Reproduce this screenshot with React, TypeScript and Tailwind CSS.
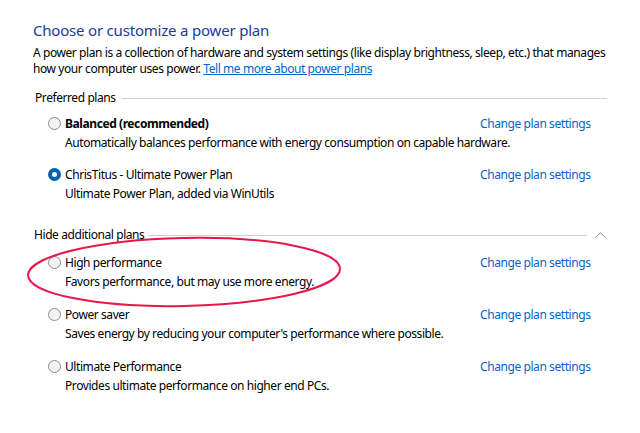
const font = { fontFamily: '"Segoe UI", "Noto Sans", Arial, sans-serif' };

function Radio({ checked }: { checked?: boolean }) {
  if (checked) {
    return (
      <span className="flex size-[13px] shrink-0 items-center justify-center rounded-full bg-[#0063b1]">
        <span className="size-[5px] rounded-full bg-white" />
      </span>
    );
  }
  return <span className="size-[13px] shrink-0 rounded-full border border-[#8c8c8c] bg-[#f3f3f3]" />;
}

type Plan = { name: string; desc: string; checked?: boolean; bold?: boolean };

function PlanRow({ plan }: { plan: Plan }) {
  return (
    <div className="pl-[15px]">
      <div className="flex h-[19px] items-center">
        <div className="flex w-[432px] items-center gap-[4px]">
          <Radio checked={plan.checked} />
          <span className={plan.bold ? "font-bold" : ""}>{plan.name}</span>
        </div>
        <span className="text-[#0066cc]">Change plan settings</span>
      </div>
      <div className="flex h-[19px] items-center whitespace-nowrap pl-[17px]">{plan.desc}</div>
    </div>
  );
}

const preferred: Plan[] = [
  { name: "Balanced (recommended)", desc: "Automatically balances performance with energy consumption on capable hardware.", bold: true },
  { name: "ChrisTitus - Ultimate Power Plan", desc: "Ultimate Power Plan, added via WinUtils", checked: true },
];

const additional: Plan[] = [
  { name: "High performance", desc: "Favors performance, but may use more energy." },
  { name: "Power saver", desc: "Saves energy by reducing your computer's performance where possible." },
  { name: "Ultimate Performance", desc: "Provides ultimate performance on higher end PCs." },
];

export default function App() {
  return (
    <div
      className="relative h-[433px] w-[640px] overflow-hidden bg-white text-[12px] leading-[16px] tracking-[-0.42px] text-black"
      style={font}
    >
      <div className="pl-[33px] pr-[33px] pt-[20px]">
        <h1 className="text-[15px] leading-[20px] tracking-[-0.2px] text-[#1e3a96]">Choose or customize a power plan</h1>
        <p className="mt-[5px] whitespace-nowrap">
          A power plan is a collection of hardware and system settings (like display brightness, sleep, etc.) that manages
          <br />
          how your computer uses power. <span className="text-[#0066cc] underline">Tell me more about power plans</span>
        </p>

        {/* Preferred plans */}
        <div className="mt-[13px] flex h-[16px] items-center pl-[2px]">
          <span>Preferred plans</span>
          <div className="ml-[6px] h-px flex-1 bg-[#cfcfcf]" />
        </div>
        <div className="mt-[8px] flex flex-col gap-[13px]">
          {preferred.map((p) => (
            <PlanRow key={p.name} plan={p} />
          ))}
        </div>

        {/* Additional plans */}
        <div className="mt-[24px] flex h-[16px] items-center pl-[1px]">
          <span>Hide additional plans</span>
          <div className="ml-[4px] h-px flex-1 bg-[#cfcfcf]" />
          <div className="flex w-[20px] justify-end">
            <svg width="11" height="6" viewBox="0 0 11 6" className="mr-[1px]">
              <path d="M0.5 5.5 L5.5 0.8 L10.5 5.5" fill="none" stroke="#888" strokeWidth="1" />
            </svg>
          </div>
        </div>
        <div className="mt-[10px] flex flex-col gap-[14px]">
          {additional.map((p) => (
            <PlanRow key={p.name} plan={p} />
          ))}
        </div>
      </div>

      {/* hand-drawn highlight */}
      <svg className="pointer-events-none absolute left-[20px] top-[230px]" width="330" height="84" viewBox="0 0 330 84">
        <ellipse cx="164" cy="42" rx="156" ry="34" fill="none" stroke="#e8174a" strokeWidth="2" transform="rotate(-1.2 164 42)" />
      </svg>
    </div>
  );
}
